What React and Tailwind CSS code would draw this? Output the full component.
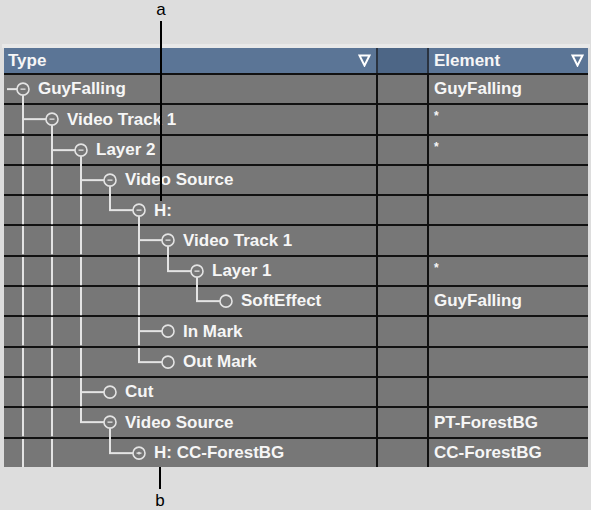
import React from "react";

const rows = [
  { label: "GuyFalling", level: 0, last: false, cont: [], icon: "minus", kids: true, el: "GuyFalling" },
  { label: "Video Track 1", level: 1, last: false, cont: [], icon: "minus", kids: true, el: "*" },
  { label: "Layer 2", level: 2, last: false, cont: [0], icon: "minus", kids: true, el: "*" },
  { label: "Video Source", level: 3, last: false, cont: [0, 1], icon: "minus", kids: true, el: "" },
  { label: "H:", level: 4, last: true, cont: [0, 1, 2], icon: "minus", kids: true, el: "" },
  { label: "Video Track 1", level: 5, last: false, cont: [0, 1, 2], icon: "minus", kids: true, el: "" },
  { label: "Layer 1", level: 6, last: true, cont: [0, 1, 2, 4], icon: "minus", kids: true, el: "*" },
  { label: "SoftEffect", level: 7, last: true, cont: [0, 1, 2, 4], icon: "none", kids: false, el: "GuyFalling" },
  { label: "In Mark", level: 5, last: false, cont: [0, 1, 2], icon: "none", kids: false, el: "" },
  { label: "Out Mark", level: 5, last: true, cont: [0, 1, 2], icon: "none", kids: false, el: "" },
  { label: "Cut", level: 3, last: false, cont: [0, 1], icon: "none", kids: false, el: "" },
  { label: "Video Source", level: 3, last: true, cont: [0, 1], icon: "minus", kids: true, el: "PT-ForestBG" },
  { label: "H: CC-ForestBG", level: 4, last: true, cont: [0, 1], icon: "plus", kids: false, el: "CC-ForestBG" },
];

const LC = "#e4e4e4";
const X = (l) => 19 + 29 * l;
const R = 6;

function TreeLines({ r }) {
  const c = X(r.level);
  const w = c + 15;
  return (
    <svg width={w} height="100%" className="shrink-0 overflow-visible">
      {r.cont.map((k) => (
        <line key={k} x1={X(k)} x2={X(k)} y1="0" y2="100%" stroke={LC} strokeWidth="2" />
      ))}
      {r.level === 0 ? (
        <line x1="3" x2={c - R} y1="50%" y2="50%" stroke={LC} strokeWidth="2" />
      ) : (
        <>
          <line x1={X(r.level - 1)} x2={X(r.level - 1)} y1="0" y2={r.last ? "50%" : "100%"} stroke={LC} strokeWidth="2" />
          <line x1={X(r.level - 1) - 1} x2={c - R} y1="50%" y2="50%" stroke={LC} strokeWidth="2" />
        </>
      )}
      {r.kids && (
        <line x1={c} x2={c} y1="50%" y2="100%" stroke={LC} strokeWidth="2" transform={`translate(0 ${R})`} />
      )}
      <circle cx={c} cy="50%" r={R} fill="#777777" stroke={LC} strokeWidth="1.6" />
      {r.icon === "minus" && (
        <line x1={c - 2.5} x2={c + 2.5} y1="50%" y2="50%" stroke="#dcdcdc" strokeWidth="1.4" />
      )}
      {r.icon === "plus" && (
        <>
          <line x1={c - 2.5} x2={c + 2.5} y1="50%" y2="50%" stroke="#dcdcdc" strokeWidth="1.4" />
          <circle cx={c} cy="50%" r="1.3" fill="#dcdcdc" />
        </>
      )}
    </svg>
  );
}

function Tri() {
  return (
    <svg width="13" height="13" viewBox="0 0 13 13" className="shrink-0">
      <polygon points="1.5,1.5 11.5,1.5 6.5,11.5" fill="none" stroke="#ffffff" strokeWidth="2" strokeLinejoin="miter" />
    </svg>
  );
}

export default function App() {
  return (
    <div className="relative w-[591px] h-[510px] overflow-hidden bg-[#dddddd] font-['Liberation_Sans',Arial,sans-serif] font-bold text-[17px] text-[#f6f6f6]">
      <div className="h-[44px]" />
      <div className="ml-[2px] w-[588px] h-[4px] bg-[#e8e8e8]" />
      <div className="ml-[4px] w-[584px]">
        <div className="flex h-[25px]">
          <div className="w-[372px] bg-[#5b7596] flex items-center justify-between pl-[4px] pr-[5px]">
            <span>Type</span>
            <Tri />
          </div>
          <div className="w-[2px] bg-[#2a3340]" />
          <div className="w-[49px] bg-[#4d6686]" />
          <div className="w-[2px] bg-[#2a3340]" />
          <div className="w-[159px] bg-[#5b7596] flex items-center justify-between pl-[5px] pr-[4px]">
            <span>Element</span>
            <Tri />
          </div>
        </div>
        {rows.map((r, i) => (
          <div key={i} className="flex h-[30.3px] border-t-2 border-[#111111]">
            <div className="w-[372px] bg-[#777777] flex items-center whitespace-nowrap">
              <TreeLines r={r} />
              <span>{r.label}</span>
            </div>
            <div className="w-[2px] bg-[#111111]" />
            <div className="w-[49px] bg-[#777777]" />
            <div className="w-[2px] bg-[#111111]" />
            <div className="w-[159px] bg-[#777777] flex items-center pl-[5px] whitespace-nowrap">
              {r.el === "*" ? (
                <span className="text-[12px] leading-none -mt-[6px]">*</span>
              ) : (
                <span>{r.el}</span>
              )}
            </div>
          </div>
        ))}
      </div>

      <div className="absolute left-[151px] top-[1px] w-[20px] text-center font-normal text-[17px] leading-none text-black">a</div>
      <div className="absolute left-[160px] top-[21px] w-[2px] h-[180px] bg-black" />
      <div className="absolute left-[159px] top-[467px] w-[2px] h-[22px] bg-black" />
      <div className="absolute left-[150px] top-[494px] w-[20px] h-[14px] text-center font-normal text-[17px] leading-[14px] text-black">b</div>
    </div>
  );
}
